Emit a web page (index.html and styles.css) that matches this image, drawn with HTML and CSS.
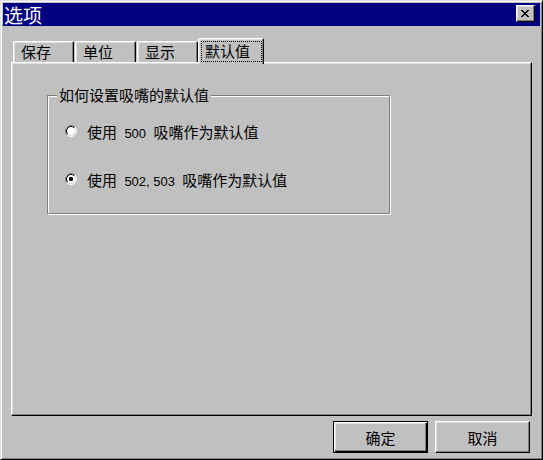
FILE: index.html
```html
<!DOCTYPE html>
<html lang="zh">
<head>
<meta charset="utf-8">
<title>选项</title>
<link rel="stylesheet" href="styles.css">
</head>
<body>
<div class="window">
  <div class="titlebar">
    <span class="title">选项</span>
    <button class="close" aria-label="关闭">
      <svg width="8" height="7" viewBox="0 0 8 7"><path d="M0 0h2v1h-2zM6 0h2v1h-2zM1 1h2v1h-2zM5 1h2v1h-2zM2 2h4v1h-4zM3 3h2v1h-2zM2 4h4v1h-4zM1 5h2v1h-2zM5 5h2v1h-2zM0 6h2v1h-2zM6 6h2v1h-2z" fill="#000"/></svg>
    </button>
  </div>
  <div class="tabs">
    <div class="tab t1">保存</div>
    <div class="tab t2">单位</div>
    <div class="tab t3">显示</div>
    <div class="tab active"><span class="focus">默认值</span></div>
  </div>
  <div class="panel">
    <div class="group">
      <span class="group-title">如何设置吸嘴的默认值</span>
      <div class="option o1">
        <svg class="radio" width="12" height="12" viewBox="0 0 12 12">
          <circle cx="6" cy="6" r="4.2" fill="#fff"/>
          <path d="M2.11 9.89A5.5 5.5 0 0 1 9.89 2.11" stroke="#808080" fill="none"/>
          <path d="M9.89 2.11A5.5 5.5 0 0 1 2.11 9.89" stroke="#fff" fill="none"/>
          <path d="M2.82 9.18A4.5 4.5 0 0 1 9.18 2.82" stroke="#000" fill="none"/>
          <path d="M9.18 2.82A4.5 4.5 0 0 1 2.82 9.18" stroke="#dfdfdf" fill="none"/>
        </svg>
        <span class="label">使用 <span class="num">500</span> 吸嘴作为默认值</span>
      </div>
      <div class="option o2">
        <svg class="radio" width="12" height="12" viewBox="0 0 12 12">
          <circle cx="6" cy="6" r="4.2" fill="#fff"/>
          <path d="M2.11 9.89A5.5 5.5 0 0 1 9.89 2.11" stroke="#808080" fill="none"/>
          <path d="M9.89 2.11A5.5 5.5 0 0 1 2.11 9.89" stroke="#fff" fill="none"/>
          <path d="M2.82 9.18A4.5 4.5 0 0 1 9.18 2.82" stroke="#000" fill="none"/>
          <path d="M9.18 2.82A4.5 4.5 0 0 1 2.82 9.18" stroke="#dfdfdf" fill="none"/>
          <rect x="4" y="4" width="4" height="4" rx="1.2" fill="#000"/>
        </svg>
        <span class="label">使用 <span class="num">502, 503</span> 吸嘴作为默认值</span>
      </div>
    </div>
  </div>
  <div class="footer">
    <button class="btn default">确定</button>
    <button class="btn">取消</button>
  </div>
</div>
</body>
</html>
```
FILE: styles.css
```css
html, body {
  margin: 0;
  padding: 0;
  background: #c0c0c0;
}
body {
  font-family: "Noto Sans CJK SC", "Liberation Sans", sans-serif;
  font-size: 15px;
  color: #000;
}
.window {
  width: 543px;
  height: 460px;
  box-sizing: border-box;
  border: 1px solid;
  border-color: #dfdfdf #000 #000 #dfdfdf;
  box-shadow: inset 1px 1px 0 #fff, inset -1px -1px 0 #808080;
  padding: 2px;
  display: flex;
  flex-direction: column;
  background: #c0c0c0;
}
.titlebar {
  height: 23px;
  background: #000080;
  display: flex;
  align-items: flex-start;
  justify-content: space-between;
  flex-shrink: 0;
}
.title {
  color: #fff;
  font-size: 19px;
  line-height: 23px;
  padding-left: 1px;
}
.close {
  width: 19px;
  height: 17px;
  margin: 2px 5px 0 0;
  padding: 0;
  box-sizing: border-box;
  background: #c0c0c0;
  border: 1px solid;
  border-color: #fff #000 #000 #fff;
  box-shadow: inset -1px -1px 0 #808080, inset 1px 1px 0 #dfdfdf;
  display: flex;
  align-items: center;
  justify-content: center;
}
.close svg { display: block; margin: 0 1px 1px 0; }
.tabs {
  display: flex;
  align-items: flex-end;
  height: 24px;
  margin: 12px 0 0 10px;
  flex-shrink: 0;
}
.tab {
  box-sizing: border-box;
  height: 21px;
  width: 61px;
  margin-right: 1px;
  padding-left: 7px;
  line-height: 19px;
  border-top: 1px solid #fff;
  border-left: 1px solid #fff;
  border-right: 1px solid #000;
  border-radius: 2px 2px 0 0;
  box-shadow: inset -1px 0 0 #808080, inset 1px 1px 0 #dfdfdf;
  white-space: nowrap;
}
.tab.t3 { margin-right: 0; }
.tab.active {
  position: relative;
  z-index: 1;
  width: 66px;
  height: 26px;
  margin-bottom: -2px;
  padding: 2px 0 0 2px;
  line-height: 19px;
  background: #c0c0c0;
}
.focus {
  display: inline-block;
  box-sizing: border-box;
  width: 61px;
  height: 21px;
  padding-left: 3px;
  border: 1px dotted #000;
  line-height: 18px;
}
.panel {
  box-sizing: border-box;
  height: 354px;
  margin: 0 8px;
  border: 1px solid;
  border-color: #fff #000 #000 #fff;
  box-shadow: inset -1px -1px 0 #808080, inset 1px 1px 0 #dfdfdf;
  padding: 32px 0 0 35px;
  flex-shrink: 0;
}
.group {
  box-sizing: border-box;
  width: 343px;
  height: 119px;
  border: 1px solid #808080;
  box-shadow: 1px 1px 0 #fff, inset 1px 1px 0 #fff;
  padding: 0 0 0 17px;
}
.group-title {
  display: inline-block;
  margin: -10px 0 0 -8px;
  padding: 0 2px;
  line-height: 18px;
  background: #c0c0c0;
  vertical-align: top;
}
.option {
  display: flex;
  align-items: center;
  height: 20px;
}
.option.o1 { margin-top: 4px; }
.option.o2 { margin-top: 28px; }
.radio {
  display: block;
  flex-shrink: 0;
  margin-right: 10px;
}
.label { white-space: nowrap; }
.num {
  font-family: "Liberation Sans", sans-serif;
  font-size: 13px;
  margin: 0 4px 0 4px;
}
.footer {
  display: flex;
  justify-content: flex-end;
  gap: 7px;
  margin: 5px 10px 0 0;
}
.btn {
  box-sizing: border-box;
  width: 95px;
  height: 32px;
  padding: 0;
  font-family: "Noto Sans CJK SC", "Liberation Sans", sans-serif;
  font-size: 15px;
  color: #000;
  background: #c0c0c0;
  border: 1px solid;
  border-color: #fff #000 #000 #fff;
  box-shadow: inset -1px -1px 0 #808080, inset 1px 1px 0 #dfdfdf;
}
.btn.default {
  border: 1px solid #000;
  box-shadow: inset 1px 1px 0 #fff, inset -1px -1px 0 #000, inset -2px -2px 0 #808080, inset 2px 2px 0 #dfdfdf;
}
```
